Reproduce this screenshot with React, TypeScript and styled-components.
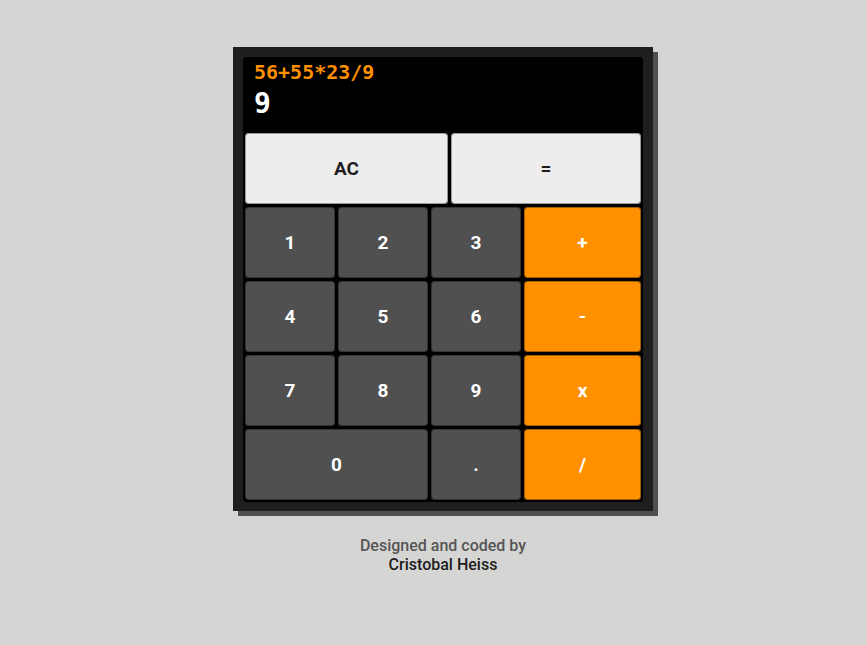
import React, { useState } from 'react';
import styled, { createGlobalStyle } from 'styled-components';

const GlobalStyle = createGlobalStyle`
  html, body { margin: 0; padding: 0; background: #d5d5d3; }
  body { font-family: Roboto, 'Liberation Sans', sans-serif; }
`;

const Page = styled.div`
  min-height: 645px; display: flex; flex-direction: column; align-items: center; padding: 47px 0 0 19px; box-sizing: border-box;
`;

const Calculator = styled.div`
  width: 420px; box-sizing: border-box; padding: 10px 10px 9px 10px; background: #1e1e1e; box-shadow: 5px 5px 0 #4f4f4f;
`;

const Display = styled.div`
  background: #000; height: 74px; box-sizing: border-box; padding: 3px 11px 0 11px; border-radius: 4px 4px 0 0; font-family: 'DejaVu Sans Mono', monospace; font-weight: bold;
`;

const Formula = styled.div`
  color: #ff9100; font-size: 20px; line-height: 24px;
`;

const Output = styled.div`
  color: #fff; font-size: 28px; line-height: 40px;
`;

const Keypad = styled.div`
  background: #000; padding: 2px; display: flex; flex-direction: column; gap: 3px; border-radius: 0 0 4px 4px;
`;

const TopRow = styled.div`
  display: grid; grid-template-columns: 203px 1fr; gap: 3px;
`;

const KeyGrid = styled.div`
  display: grid; grid-template-columns: 90px 90px 90px 1fr; grid-auto-rows: 71px; gap: 3px;
`;

const Key = styled.button<{ $kind: 'light' | 'dark' | 'op'; $span?: number }>`
  height: 71px; border: none; border-radius: 4px; cursor: pointer;
  font-family: Roboto, 'Liberation Sans', sans-serif; font-size: 19px; font-weight: bold;
  grid-column: span ${(p) => p.$span || 1};
  background: ${(p) => (p.$kind === 'light' ? '#ededed' : p.$kind === 'op' ? '#ff9100' : '#505050')};
  color: ${(p) => (p.$kind === 'light' ? '#1e1e1e' : '#fff')};
  box-shadow: inset 0 0 0 1px rgba(0,0,0,0.35);
  &:hover { filter: brightness(1.1); }
`;

const Credit = styled.div`
  margin-top: 25px; text-align: center; font-size: 16px; line-height: 19px; font-weight: 500; color: #555;
`;

const Author = styled.div`
  color: #1e1e1e;
`;

const KEYS: { label: string; kind: 'dark' | 'op'; span?: number }[] = [
  { label: '1', kind: 'dark' },
  { label: '2', kind: 'dark' },
  { label: '3', kind: 'dark' },
  { label: '+', kind: 'op' },
  { label: '4', kind: 'dark' },
  { label: '5', kind: 'dark' },
  { label: '6', kind: 'dark' },
  { label: '-', kind: 'op' },
  { label: '7', kind: 'dark' },
  { label: '8', kind: 'dark' },
  { label: '9', kind: 'dark' },
  { label: 'x', kind: 'op' },
  { label: '0', kind: 'dark', span: 2 },
  { label: '.', kind: 'dark' },
  { label: '/', kind: 'op' },
];

const App = () => {
  const [formula] = useState('56+55*23/9');
  const [output] = useState('9');

  return (
    <Page>
      <GlobalStyle />
      <Calculator>
        <Display>
          <Formula>{formula}</Formula>
          <Output>{output}</Output>
        </Display>
        <Keypad>
          <TopRow>
            <Key $kind="light">AC</Key>
            <Key $kind="light">=</Key>
          </TopRow>
          <KeyGrid>
            {KEYS.map((k) => (
              <Key key={k.label} $kind={k.kind} $span={k.span}>
                {k.label}
              </Key>
            ))}
          </KeyGrid>
        </Keypad>
      </Calculator>
      <Credit>
        Designed and coded by
        <Author>Cristobal Heiss</Author>
      </Credit>
    </Page>
  );
};

export default App;
